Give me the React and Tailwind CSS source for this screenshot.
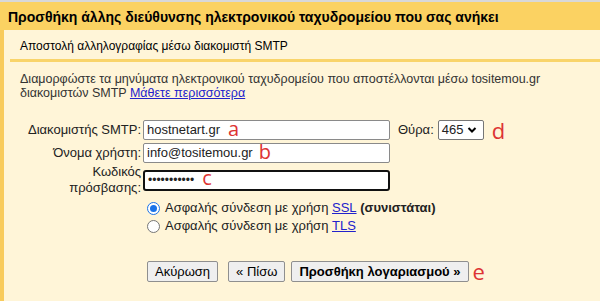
export default function App() {
  const font = { fontFamily: '"Liberation Sans", Arial, sans-serif' };
  return (
    <div className="w-[600px] h-[301px] overflow-hidden bg-[#fff5d8] text-[#222]" style={font}>
      <div className="h-[2px] bg-[#d8d8d8]" />
      <div className="h-[28px] bg-[#fbd262] flex items-center pl-[8px] pt-[2px]">
        <span className="text-[14px] font-bold text-black leading-none">Προσθήκη άλλης διεύθυνσης ηλεκτρονικού ταχυδρομείου που σας ανήκει</span>
      </div>
      <div className="flex h-[271px]">
        <div className="w-[4px] bg-[#f8cb5c]" />
        <div className="flex-1 pl-[6px]">
          <div className="h-[32px] flex items-center pl-[10px] border-b-[3px] border-[#f9d46a] text-[12px] text-black pt-[2px]">
            Αποστολή αλληλογραφίας μέσω διακομιστή SMTP
          </div>
          <div className="pl-[10px] pt-[10px] text-[12.5px] leading-[14px] text-[#333]">
            Διαμορφώστε τα μηνύματα ηλεκτρονικού ταχυδρομείου που αποστέλλονται μέσω tositemou.gr<br />
            διακομιστών SMTP <span className="text-[#2222cc] underline">Μάθετε περισσότερα</span>
          </div>
          <div className="mt-[19px] flex flex-col text-[13px] text-[#222]">
            <div className="flex items-center h-[22px]">
              <div className="w-[133px] text-right pr-[2px]">Διακομιστής SMTP:</div>
              <div className="w-[247px] h-[20px] border border-[#8a8a8a] rounded-[2px] bg-white flex items-center pl-[3px]">
                <span>hostnetart.gr</span>
                <span className="ml-[8px] text-[20px] leading-none text-[#d33] -mt-[2px]" style={{ fontFamily: '"Open Sans", sans-serif' }}>a</span>
              </div>
              <span className="ml-[8px]">Θύρα:</span>
              <div className="ml-[4px] w-[46px] h-[20px] border border-[#767676] rounded-[2px] bg-white flex items-center pl-[3px] gap-[4px]">
                <span>465</span>
                <svg width="10" height="8" viewBox="0 0 10 8"><path d="M1.5 2 L5 5.5 L8.5 2" stroke="#000" strokeWidth="2" fill="none" /></svg>
              </div>
              <span className="ml-[8px] text-[22px] leading-none text-[#d33]" style={{ fontFamily: '"Open Sans", sans-serif' }}>d</span>
            </div>
            <div className="flex items-center h-[22px] mt-[1px]">
              <div className="w-[133px] text-right pr-[2px]">Όνομα χρήστη:</div>
              <div className="w-[247px] h-[20px] border border-[#8a8a8a] rounded-[2px] bg-white flex items-center pl-[3px]">
                <span>info@tositemou.gr</span>
                <span className="ml-[6px] text-[20px] leading-none text-[#d33] -mt-[2px]" style={{ fontFamily: '"Open Sans", sans-serif' }}>b</span>
              </div>
            </div>
            <div className="flex items-center h-[30px] mt-[1px]">
              <div className="w-[133px] text-right pr-[2px] leading-[16px]">Κωδικός<br />πρόσβασης:</div>
              <div className="w-[247px] h-[21px] border-2 border-[#111] rounded-[3px] bg-white flex items-center pl-[3px]">
                <span className="text-[12px] leading-none">•••••••••••</span>
                <span className="ml-[8px] text-[20px] leading-none text-[#d33] -mt-[4px]" style={{ fontFamily: '"Open Sans", sans-serif' }}>c</span>
              </div>
            </div>
            <div className="pl-[137px] mt-[4px] flex flex-col">
              <label className="flex items-center h-[18px]">
                <span className="w-[13px] h-[13px] rounded-full border border-[#1a73e8] bg-white flex items-center justify-center mr-[5px]">
                  <span className="w-[7px] h-[7px] rounded-full bg-[#1a73e8]" />
                </span>
                Ασφαλής σύνδεση με χρήση&nbsp;<span className="text-[#2222cc] underline">SSL</span>&nbsp;<b>(συνιστάται)</b>
              </label>
              <label className="flex items-center h-[18px]">
                <span className="w-[13px] h-[13px] rounded-full border border-[#767676] bg-white mr-[5px]" />
                Ασφαλής σύνδεση με χρήση&nbsp;<span className="text-[#2222cc] underline">TLS</span>
              </label>
            </div>
            <div className="pl-[137px] mt-[25px] flex items-center">
              <button className="h-[21px] px-[7px] border border-[#8f8f8f] rounded-[2px] bg-[#efefef] text-black text-[13px]">Ακύρωση</button>
              <button className="ml-[10px] h-[21px] px-[7px] border border-[#8f8f8f] rounded-[2px] bg-[#efefef] text-black text-[13px]">« Πίσω</button>
              <button className="ml-[6px] h-[21px] px-[7px] border border-[#8f8f8f] rounded-[2px] bg-[#efefef] text-black text-[13px] font-bold">Προσθήκη λογαριασμού »</button>
              <span className="ml-[4px] text-[22px] leading-none text-[#d33]" style={{ fontFamily: '"Open Sans", sans-serif' }}>e</span>
            </div>
          </div>
        </div>
      </div>
    </div>
  );
}
